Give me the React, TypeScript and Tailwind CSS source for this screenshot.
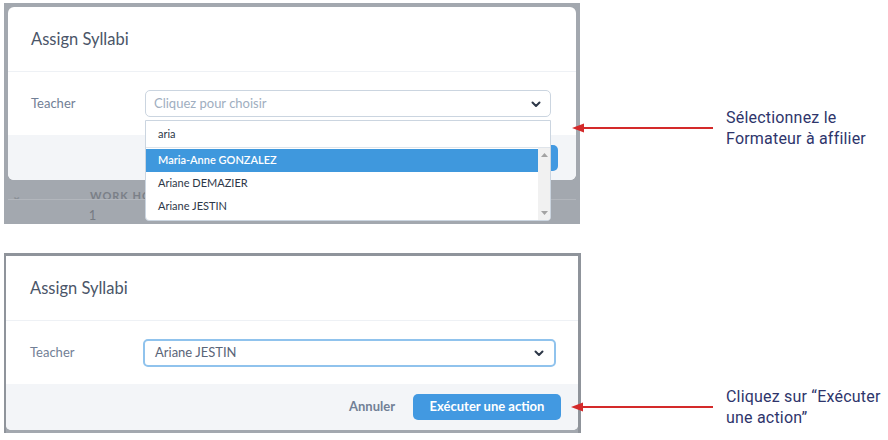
import React from "react";

const modalFont = { fontFamily: "Lato, 'Open Sans', sans-serif" };
const noteFont = { fontFamily: "Roboto, 'Liberation Sans', sans-serif" };

function Chevron() {
  return (
    <svg width="12" height="12" viewBox="0 0 24 24" fill="none" stroke="#2d3748" strokeWidth="4" strokeLinecap="round" strokeLinejoin="round">
      <path d="M5 9l7 7 7-7" />
    </svg>
  );
}

function Arrow({ width }: { width: number }) {
  return (
    <svg width={width} height="12" viewBox={`0 0 ${width} 12`}>
      <line x1="9" y1="6" x2={width} y2="6" stroke="#d42a2a" strokeWidth="2" />
      <polygon points="0,6 12,1.5 12,10.5" fill="#d42a2a" />
    </svg>
  );
}

function Note({ lines }: { lines: string[] }) {
  return (
    <div className="text-[16px] leading-[21px] tracking-[0.2px] text-[#2e356b]" style={noteFont}>
      {lines.map((l) => (
        <div key={l}>{l}</div>
      ))}
    </div>
  );
}

export default function App() {
  return (
    <div className="w-[888px] h-[440px] bg-white overflow-hidden pl-[4px] pt-[3px]" style={modalFont}>
      {/* Row 1 */}
      <div className="flex items-start">
        <div className="w-[576px] h-[221px] bg-[#a3a8af] overflow-hidden px-[4px] pt-[4px] flex flex-col shrink-0">
          <div className="h-[173px] bg-white rounded-[6px] flex flex-col shrink-0">
            <div className="h-[65px] flex items-center px-[23px] border-b border-[#eef1f5] text-[16.5px] text-[#4a5568]">
              Assign Syllabi
            </div>
            <div className="h-[63px] flex items-center pl-[23px] pr-[25px]">
              <div className="w-[114px] text-[13px] text-[#718096]">Teacher</div>
              <div className="relative flex-1">
                <div className="h-[27px] border border-[#cbd5e0] rounded-[5px] flex items-center justify-between pl-[8px] pr-[8px]">
                  <span className="text-[13px] text-[#a0aec0]">Cliquez pour choisir</span>
                  <Chevron />
                </div>
                <div className="absolute left-0 right-0 top-full mt-[3px] h-[101px] bg-white border border-[#cbd5e0] rounded-b-[4px] flex flex-col overflow-hidden z-10">
                  <div className="h-[27px] shrink-0 flex items-center pl-[12px] text-[11px] text-[#2d3748] border-b border-[#dfe4ea]">
                    aria
                  </div>
                  <div className="flex flex-1">
                    <div className="flex-1 flex flex-col pt-[1px]">
                      <div className="h-[23px] bg-[#3f98dd] text-white font-semibold text-[11px] flex items-center pl-[12px]">
                        Maria-Anne GONZALEZ
                      </div>
                      <div className="h-[23px] text-[#2d3748] text-[11px] flex items-center pl-[12px]">Ariane DEMAZIER</div>
                      <div className="h-[23px] text-[#2d3748] text-[11px] flex items-center pl-[12px]">Ariane JESTIN</div>
                    </div>
                    <div className="w-[12px] bg-[#f1f1f1] flex flex-col items-center justify-between py-[5px]">
                      <svg width="7" height="4" viewBox="0 0 7 4"><polygon points="3.5,0 7,4 0,4" fill="#a3a3a3" /></svg>
                      <svg width="7" height="4" viewBox="0 0 7 4"><polygon points="0,0 7,0 3.5,4" fill="#a3a3a3" /></svg>
                    </div>
                  </div>
                </div>
              </div>
            </div>
            <div className="flex-1 bg-[#f3f5f8] rounded-b-[6px] flex items-center justify-end pr-[18px] gap-[18px]">
              <span className="text-[13px] font-bold text-[#718096]">Annuler</span>
              <div className="h-[26px] px-[18px] rounded-[5px] bg-[#4299e1] text-white text-[13px] font-bold flex items-center">
                Exécuter une action
              </div>
            </div>
          </div>
          <div className="h-[20px] overflow-hidden flex items-end shrink-0 border-b border-[#b2b6bc]">
            <div className="flex items-center text-[11px] font-bold tracking-[1px] text-[#7b8088] -mb-[5px]">
              <span className="w-[82px] pl-[4px] text-[#8a8f96]">⌄</span>
              <span>WORK HOURS</span>
            </div>
          </div>
          <div className="flex text-[13px] text-[#767b83] pt-[7px] leading-[16px]">
            <span className="w-[84px]" />
            <span className="w-[153px]">1</span>
            <span className="w-[247px]">2023-07-01 12:00:00</span>
            <span>2023-07-31 12:00</span>
          </div>
        </div>
        <div className="flex items-center mt-[104px] -ml-[8px]">
          <Arrow width={141} />
          <div className="ml-[13px]">
            <Note lines={["Sélectionnez le", "Formateur à affilier"]} />
          </div>
        </div>
      </div>

      {/* Row 2 */}
      <div className="flex items-start mt-[29px]">
        <div className="w-[577px] h-[180px] bg-[#a3a8af] border-t-[3px] border-l-[2px] border-r-[3px] border-[#8f949b] overflow-hidden flex flex-col shrink-0">
          <div className="h-[174px] bg-white rounded-b-[5px] flex flex-col shrink-0">
            <div className="h-[65px] flex items-center px-[24px] border-b border-[#eef1f5] text-[16.5px] text-[#4a5568]">
              Assign Syllabi
            </div>
            <div className="h-[63px] flex items-center pl-[24px] pr-[22px]">
              <div className="w-[113px] text-[13px] text-[#718096]">Teacher</div>
              <div className="flex-1 h-[28px] border-2 border-[#90c3ed] rounded-[5px] flex items-center justify-between pl-[10px] pr-[9px]">
                <span className="text-[13px] text-[#5a6578]">Ariane JESTIN</span>
                <Chevron />
              </div>
            </div>
            <div className="flex-1 bg-[#f3f5f8] rounded-b-[5px] flex items-center justify-end pr-[17px] gap-[18px]">
              <span className="text-[13px] font-bold text-[#718096]">Annuler</span>
              <div className="h-[26px] w-[148px] justify-center rounded-[5px] bg-[#4299e1] text-white text-[13px] font-bold flex items-center">
                Exécuter une action
              </div>
            </div>
          </div>
        </div>
        <div className="flex items-center mt-[133px] -ml-[10px]">
          <Arrow width={142} />
          <div className="ml-[13px]">
            <Note lines={["Cliquez sur “Exécuter", "une action”"]} />
          </div>
        </div>
      </div>
    </div>
  );
}
